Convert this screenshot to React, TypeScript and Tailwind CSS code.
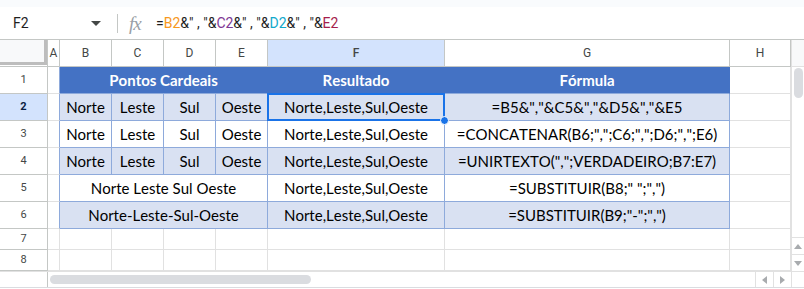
import type { ReactNode } from 'react';

const COLS = ['A', 'B', 'C', 'D', 'E', 'F', 'G', 'H'];

const cellFont = "font-['Lato','Liberation_Sans',sans-serif] [font-kerning:none] text-[15px] text-black";
const headFont = "font-['Lato','Liberation_Sans',sans-serif] [font-kerning:none] text-[15px] font-bold text-white";
const light = 'bg-[#d9e1f2]';

function Cell({ children, className = '', span }: { children?: ReactNode; className?: string; span?: string }) {
  return (
    <div className={`flex items-center justify-center border-r border-b overflow-hidden whitespace-nowrap ${span ?? ''} ${className}`}>
      {children}
    </div>
  );
}

function RowHead({ n, active }: { n: number; active?: boolean }) {
  return (
    <div
      className={`flex items-center justify-center border-r border-b border-[#c4c7c5] font-['Roboto',sans-serif] text-[11px] ${
        active ? 'bg-[#d3e3fd] font-bold text-[#0b1f44]' : 'bg-white text-[#444746]'
      }`}
    >
      {n}
    </div>
  );
}

function Tri({ dir }: { dir: 'up' | 'down' | 'left' | 'right' }) {
  const d = {
    up: 'M0 5L4 0L8 5z',
    down: 'M0 0h8L4 5z',
    left: 'M5 0v8L0 4z',
    right: 'M0 0v8L5 4z',
  }[dir];
  const vertical = dir === 'up' || dir === 'down';
  return (
    <svg width={vertical ? 8 : 5} height={vertical ? 5 : 8} viewBox={vertical ? '0 0 8 5' : '0 0 5 8'}>
      <path d={d} fill="#a8abae" />
    </svg>
  );
}

function DataRow({ n, bg, values, result, formula }: { n: number; bg: string; values: string[]; result: string; formula: string }) {
  return (
    <>
      <RowHead n={n} active={n === 2} />
      <Cell className="border-[#e1e1e1] border-r-[#8eaadb]" />
      {values.map((v, i) => (
        <Cell key={i} className={`${bg} ${cellFont} border-[#8eaadb]`}>
          {v}
        </Cell>
      ))}
      <Cell className={`${bg} ${cellFont} border-[#8eaadb] ${n === 2 ? 'relative overflow-visible' : ''}`}>
        {result}
        {n === 2 && (
          <>
            <div className="absolute -left-px -top-px -right-px -bottom-px border-2 border-[#1a73e8]" />
            <div className="absolute -right-[5px] -bottom-[5px] w-[9px] h-[9px] rounded-full bg-[#1a73e8] border border-white z-10" />
          </>
        )}
      </Cell>
      <Cell className={`${bg} ${cellFont} border-[#8eaadb]`}>{formula}</Cell>
      <Cell className="border-[#e1e1e1]" />
    </>
  );
}

function MergedRow({ n, bg, text, result, formula }: { n: number; bg: string; text: string; result: string; formula: string }) {
  return (
    <>
      <RowHead n={n} />
      <Cell className="border-[#e1e1e1] border-r-[#8eaadb]" />
      <Cell span="col-span-4" className={`${bg} ${cellFont} border-[#8eaadb]`}>
        {text}
      </Cell>
      <Cell className={`${bg} ${cellFont} border-[#8eaadb]`}>{result}</Cell>
      <Cell className={`${bg} ${cellFont} border-[#8eaadb]`}>{formula}</Cell>
      <Cell className="border-[#e1e1e1]" />
    </>
  );
}

function EmptyRow({ n }: { n: number }) {
  return (
    <>
      <RowHead n={n} />
      {COLS.map(c => (
        <Cell key={c} className="border-[#e1e1e1]" />
      ))}
    </>
  );
}

function FormulaBar() {
  return (
    <div className="flex items-center h-[33px] border-b border-[#c4c7c5] bg-white font-['Roboto',sans-serif]">
      <div className="w-[108px] flex items-center justify-between pl-[13px] pr-[7px]">
        <span className="text-[14px] text-[#1f1f1f]">F2</span>
        <svg width="10" height="6" viewBox="0 0 10 6" className="mt-px">
          <path d="M0 0h10L5 5z" fill="#444746" />
        </svg>
      </div>
      <div className="w-px h-[19px] bg-[#c4c7c5] ml-[9px]" />
      <span className="ml-[11px] w-[19px] font-['Liberation_Serif',serif] italic text-[19px] leading-none text-[#9aa0a6] tracking-[-1px]">fx</span>
      <span className="ml-[8px] text-[14px] text-[#1f1f1f] whitespace-pre">
        =<span className="text-[#f7981d]">B2</span>&amp;" , "&amp;<span className="text-[#7e3794]">C2</span>&amp;" , "&amp;
        <span className="text-[#11a9cc]">D2</span>&amp;" , "&amp;<span className="text-[#a61d4c]">E2</span>
      </span>
    </div>
  );
}

export default function App() {
  return (
    <div className="w-[804px] h-[289px] bg-white overflow-hidden">
      <div className="h-[7px] bg-[#f9fbfd]" />
      <FormulaBar />
      <div className="flex">
        <div className="grid grid-cols-[48px_12px_52px_52px_52px_52px_177px_285px_61px] grid-rows-[27px_27px_27px_27px_27px_27px_27px_21px_21px] w-[791px]">
          {/* column headers */}
          <div className="border-r border-b border-[#c4c7c5] bg-white relative">
            <div className="absolute left-0 top-0 w-[47px] h-[25px] bg-[#f8f9fa] border-r-[3px] border-b-[3px] border-[#bdbdbd]" />
          </div>
          {COLS.map(c => (
            <div
              key={c}
              className={`flex items-center justify-center border-r border-b border-[#c4c7c5] font-['Roboto',sans-serif] text-[12px] text-[#444746] ${
                c === 'F' ? 'bg-[#d3e3fd] font-medium text-[#0b1f44]' : 'bg-white'
              }`}
            >
              {c}
            </div>
          ))}

          {/* row 1 */}
          <RowHead n={1} />
          <Cell className="border-[#e1e1e1] border-r-[#8eaadb]" />
          <Cell span="col-span-4" className={`bg-[#4472c4] border-[#4472c4] border-b-[#8eaadb] ${headFont}`}>
            Pontos Cardeais
          </Cell>
          <Cell className={`bg-[#4472c4] border-[#4472c4] border-b-[#8eaadb] ${headFont}`}>Resultado</Cell>
          <Cell className={`bg-[#4472c4] border-[#4472c4] border-b-[#8eaadb] ${headFont}`}>Fórmula</Cell>
          <Cell className="border-[#e1e1e1]" />

          <DataRow n={2} bg={light} values={['Norte', 'Leste', 'Sul', 'Oeste']} result="Norte,Leste,Sul,Oeste" formula={'=B5&","&C5&","&D5&","&E5'} />
          <DataRow n={3} bg="bg-white" values={['Norte', 'Leste', 'Sul', 'Oeste']} result="Norte,Leste,Sul,Oeste" formula={'=CONCATENAR(B6;",";C6;",";D6;",";E6)'} />
          <DataRow n={4} bg={light} values={['Norte', 'Leste', 'Sul', 'Oeste']} result="Norte,Leste,Sul,Oeste" formula={'=UNIRTEXTO(",";VERDADEIRO;B7:E7)'} />
          <MergedRow n={5} bg="bg-white" text="Norte Leste Sul Oeste" result="Norte,Leste,Sul,Oeste" formula={'=SUBSTITUIR(B8;" ";",")'} />
          <MergedRow n={6} bg={light} text="Norte-Leste-Sul-Oeste" result="Norte,Leste,Sul,Oeste" formula={'=SUBSTITUIR(B9;"-";",")'} />
          <EmptyRow n={7} />
          <EmptyRow n={8} />
        </div>

        {/* vertical scrollbar */}
        <div className="w-[13px] flex flex-col border-l border-[#e1e1e1] bg-white">
          <div className="h-[27px] shrink-0 bg-[#f8f9fa] border-b border-[#e1e1e1]" />
          <div className="mx-auto mt-px w-[9px] h-[30px] shrink-0 rounded-full bg-[#dadce0]" />
          <div className="flex-1" />
          <div className="h-[17px] flex items-center justify-center border-t border-[#e1e1e1]">
            <Tri dir="up" />
          </div>
          <div className="h-[17px] flex items-center justify-center border-t border-[#e1e1e1]">
            <Tri dir="down" />
          </div>
        </div>
      </div>

      {/* horizontal scrollbar */}
      <div className="flex h-[17px] border-t border-[#e1e1e1] border-b border-b-[#dadce0] bg-white">
        <div className="w-[48px] border-r border-[#c4c7c5]" />
        <div className="flex-1 flex items-center pl-[2px]">
          <div className="w-[261px] h-[9px] rounded-full bg-[#dadce0]" />
        </div>
        <div className="w-[18px] flex items-center justify-center border-l border-[#e1e1e1]">
          <Tri dir="left" />
        </div>
        <div className="w-[18px] flex items-center justify-center border-l border-[#e1e1e1]">
          <Tri dir="right" />
        </div>
        <div className="w-[13px] border-l border-[#e1e1e1]" />
      </div>
    </div>
  );
}
